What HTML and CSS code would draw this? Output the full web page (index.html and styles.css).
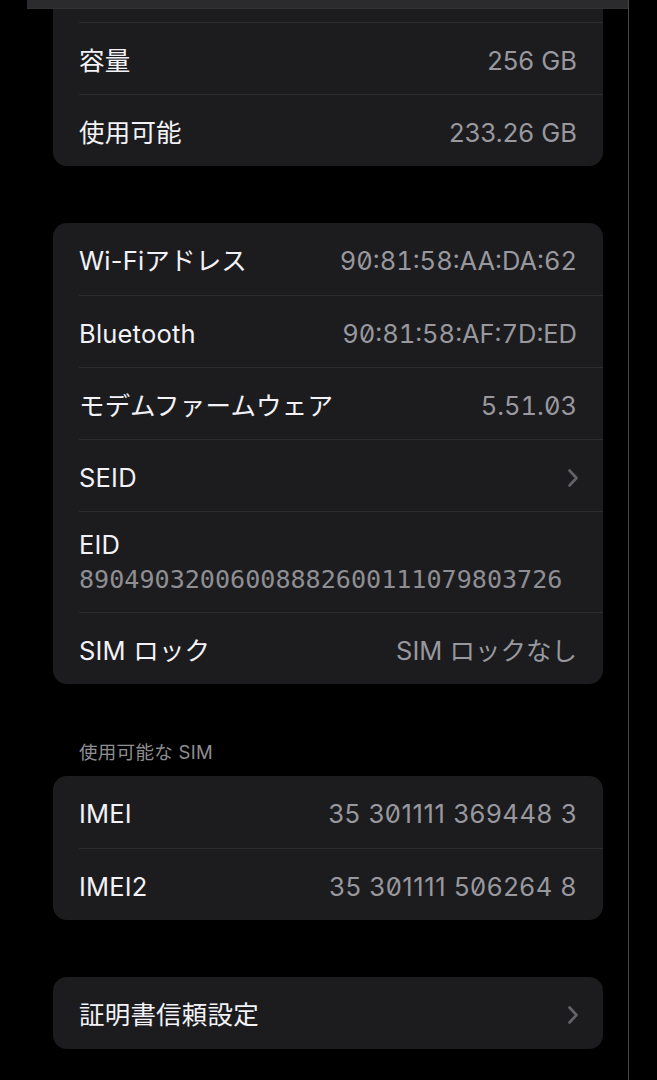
FILE: index.html
```html
<!DOCTYPE html>
<html lang="ja">
<head>
<meta charset="utf-8">
<title>情報</title>
<link rel="stylesheet" href="styles.css">
</head>
<body>
<div class="screen">
  <div class="navbar"></div>
  <div class="content">
    <section class="card card--cut">
      <div class="stub"></div>
      <div class="row"><span class="label">容量</span><span class="value">256 GB</span></div>
      <div class="row"><span class="label">使用可能</span><span class="value">233.26 GB</span></div>
    </section>

    <section class="card">
      <div class="row"><span class="label">Wi-Fiアドレス</span><span class="value mono">90:81:58:AA:DA:62</span></div>
      <div class="row"><span class="label">Bluetooth</span><span class="value mono">90:81:58:AF:7D:ED</span></div>
      <div class="row"><span class="label">モデムファームウェア</span><span class="value mono">5.51.03</span></div>
      <div class="row"><span class="label">SEID</span>
        <svg class="chevron" width="12" height="20" viewBox="0 0 12 20"><path d="M2.5 2.5 L9.5 10 L2.5 17.5" fill="none" stroke="#636368" stroke-width="2.6" stroke-linecap="round" stroke-linejoin="round"/></svg>
      </div>
      <div class="row row--stack"><span class="label">EID</span><span class="value eid">89049032006008882600111079803726</span></div>
      <div class="row"><span class="label">SIM ロック</span><span class="value">SIM ロックなし</span></div>
    </section>

    <h2 class="section-header">使用可能な SIM</h2>
    <section class="card card--sim">
      <div class="row"><span class="label">IMEI</span><span class="value imei">35 301111 369448 3</span></div>
      <div class="row"><span class="label">IMEI2</span><span class="value imei">35 301111 506264 8</span></div>
    </section>

    <section class="card card--last">
      <div class="row"><span class="label">証明書信頼設定</span>
        <svg class="chevron" width="12" height="20" viewBox="0 0 12 20"><path d="M2.5 2.5 L9.5 10 L2.5 17.5" fill="none" stroke="#636368" stroke-width="2.6" stroke-linecap="round" stroke-linejoin="round"/></svg>
      </div>
    </section>
  </div>
</div>
</body>
</html>
```

FILE: styles.css
```css
* { box-sizing: border-box; }

html, body {
  margin: 0;
  padding: 0;
  background: #000;
}

body {
  font-family: Inter, "Noto Sans CJK JP", sans-serif;
  -webkit-font-smoothing: antialiased;
}

.screen {
  width: 629px;
  min-height: 1080px;
  border-right: 1px solid #48484a;
  background: #000;
}

.navbar {
  height: 9px;
  margin-left: 27px;
  background: #2b2b2d;
  border-bottom: 1px solid #323234;
}

.content {
  padding: 0 25px 0 53px;
}

.card {
  background: #1c1c1e;
  border-radius: 14px;
  overflow: hidden;
  margin-top: 57px;
}

.card--cut {
  margin-top: 0;
  border-radius: 0 0 14px 14px;
}

.stub {
  height: 13px;
}

.row {
  height: 72px;
  margin-left: 26px;
  padding-right: 26px;
  padding-top: 4px;
  border-top: 1px solid #2c2c2e;
  display: flex;
  align-items: center;
  justify-content: space-between;
}

.card > .row:first-child {
  border-top: none;
}

.row--stack {
  height: 101px;
  flex-direction: column;
  align-items: flex-start;
  justify-content: flex-start;
  padding-top: 18px;
  gap: 5px;
}

.label {
  color: #f2f2f7;
  font-size: 25.5px;
  line-height: 30px;
  letter-spacing: 0.2px;
}

.value {
  color: #98989e;
  font-size: 25.5px;
  line-height: 30px;
  letter-spacing: 0;
}

.mono {
  font-feature-settings: "tnum" 1, "zero" 1;
}

.imei {
  font-feature-settings: "zero" 1;
  letter-spacing: 0.6px;
}

.eid {
  font-family: "DejaVu Sans Mono", monospace;
  font-size: 25.1px;
  letter-spacing: 0;
  color: #8e8e93;
}

.chevron {
  display: block;
  margin-right: -2px;
}

.section-header {
  margin: 58px 0 14px 26px;
  height: 20px;
  font-size: 18.5px;
  line-height: 20px;
  font-weight: 400;
  letter-spacing: 0.3px;
  color: #8e8e93;
}

.card--sim {
  margin-top: 0;
}
```
